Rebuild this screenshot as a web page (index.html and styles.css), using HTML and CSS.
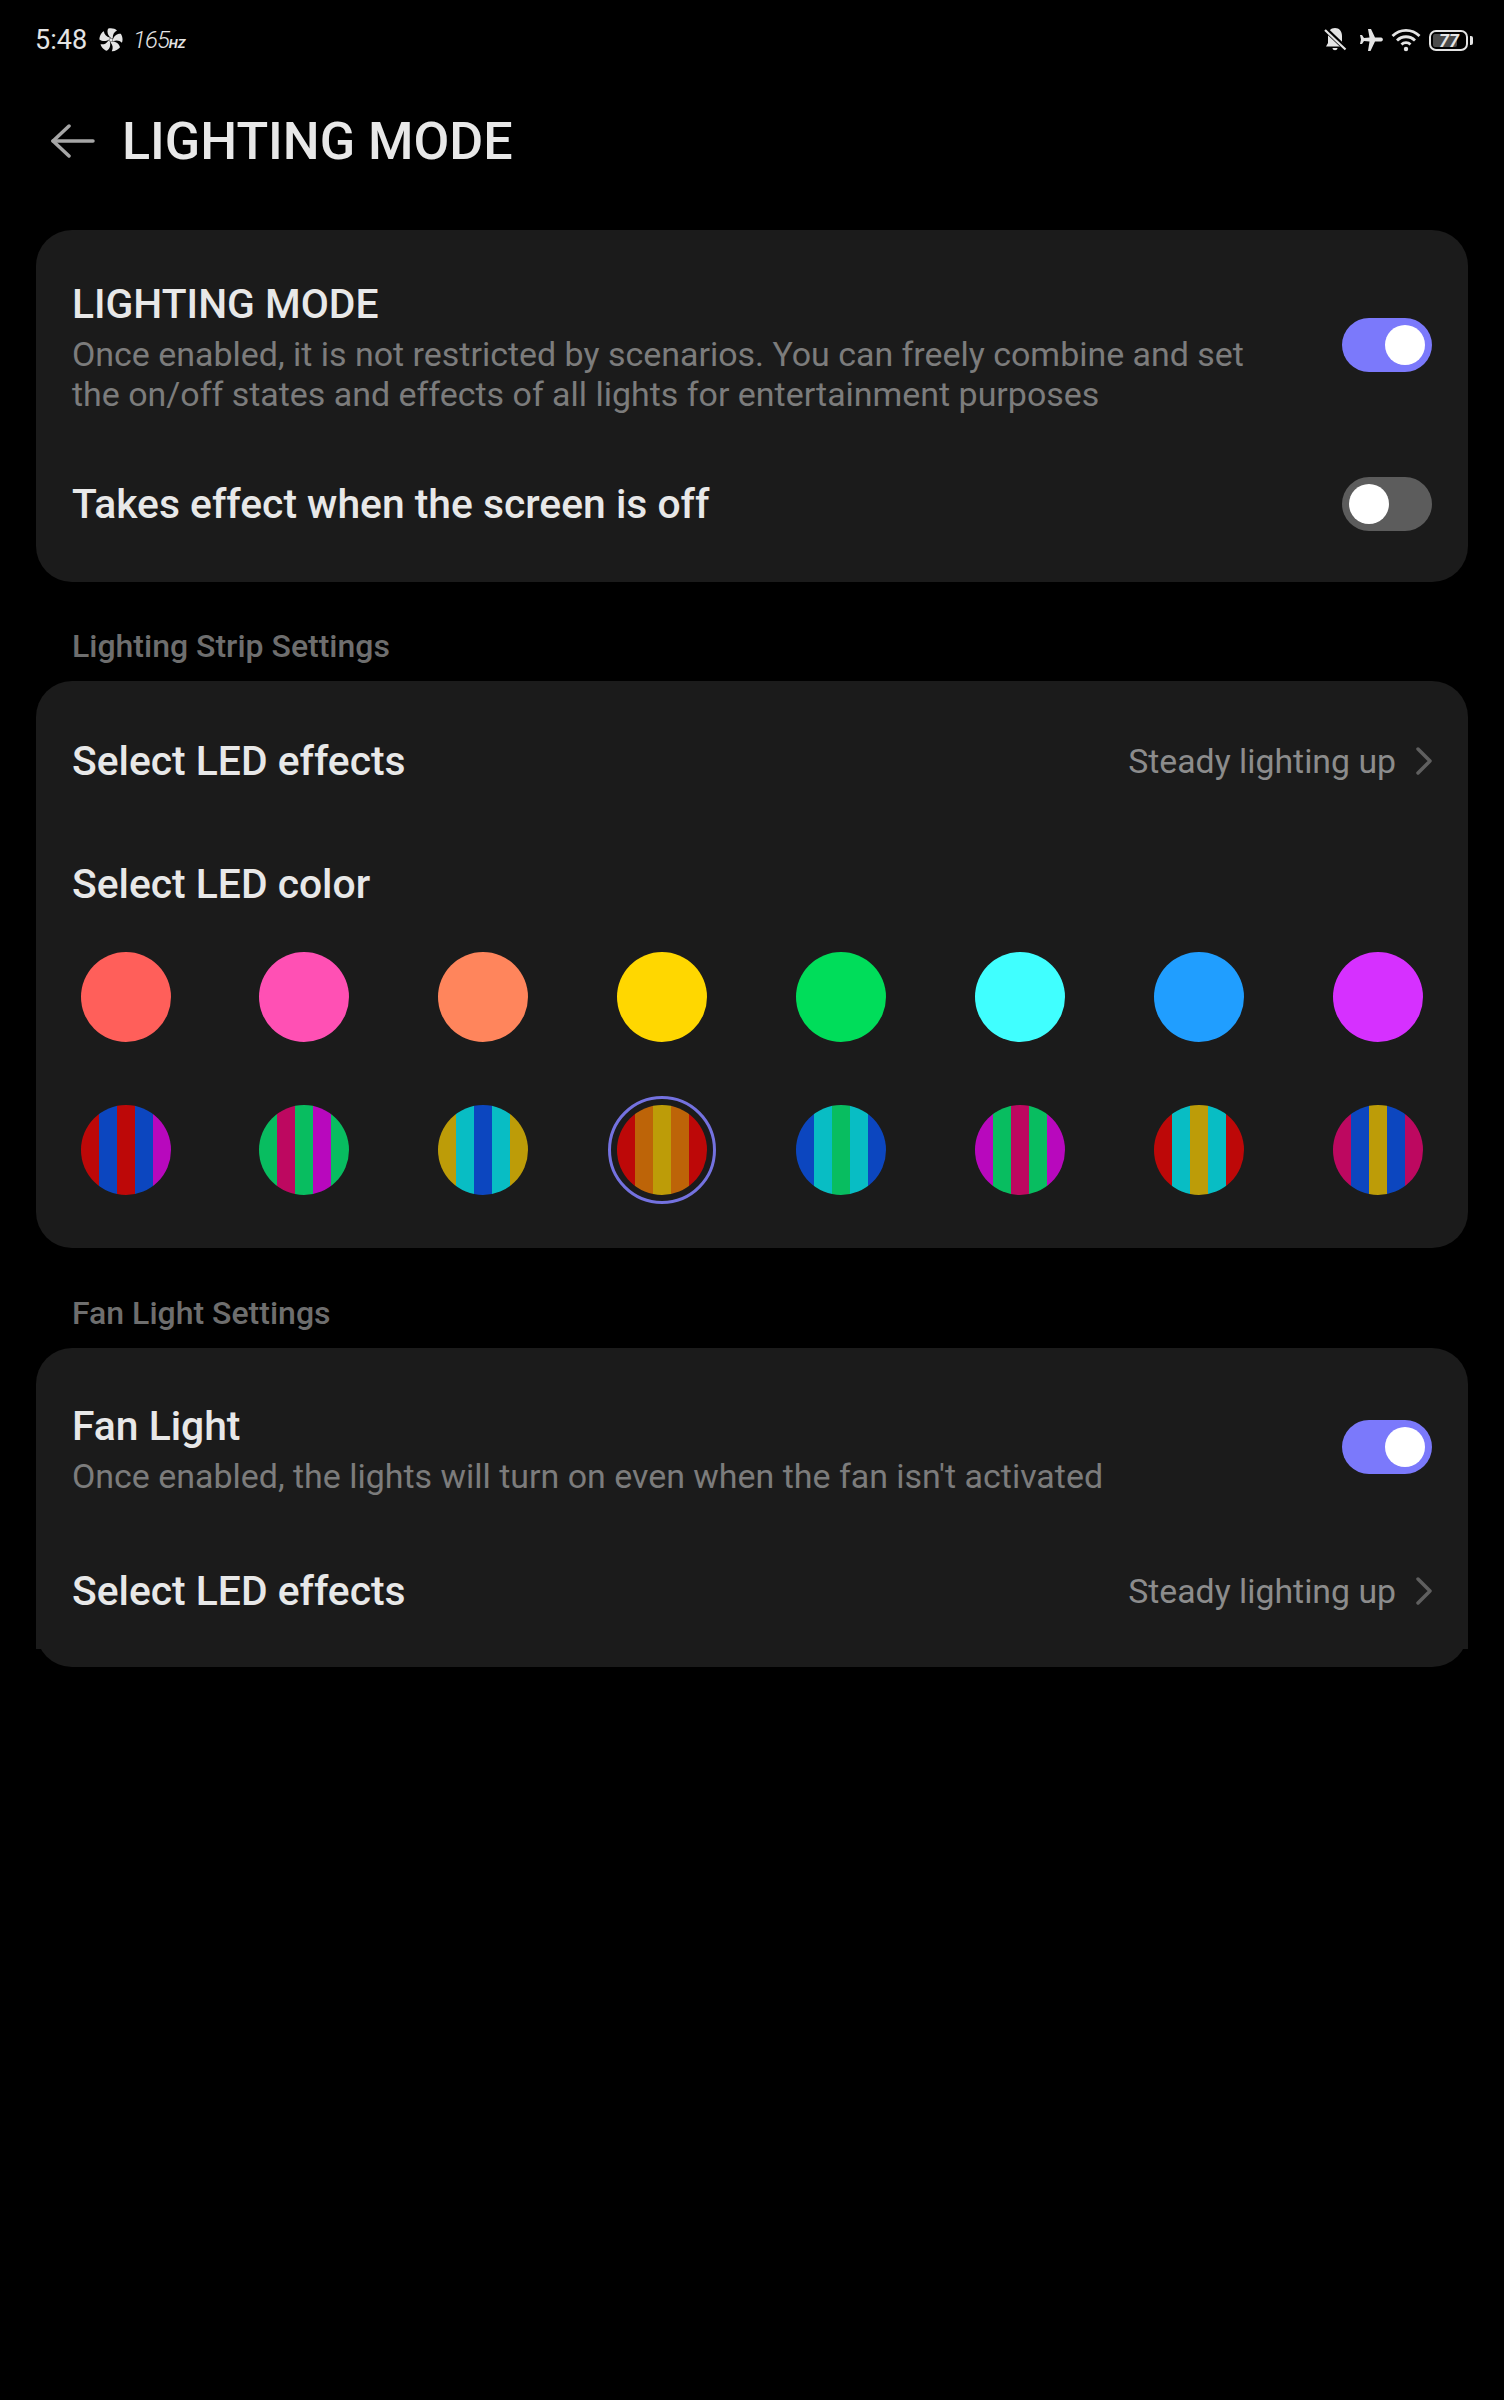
FILE: index.html
```html
<!DOCTYPE html>
<html lang="en">
<head>
  <meta charset="UTF-8">
  <title>Lighting Mode</title>
  <link rel="stylesheet" href="styles.css">
</head>
<body>
  <div class="status-bar">
    <div class="status-left">
      <span class="time">5:48</span>
      <svg class="fan-icon" width="24" height="24" viewBox="0 0 24 24" fill="#e4e4e4">
        <circle cx="12" cy="12" r="1.800"/>
        <path id="blade" d="M12 10 C9.500 8 7.500 5 9 0.800 C12 -0.200 16 0.600 18 2.500 C15 4 13.500 6.500 13.800 10.500 Z"/>
        <use href="#blade" transform="rotate(72 12 12)"/>
        <use href="#blade" transform="rotate(144 12 12)"/>
        <use href="#blade" transform="rotate(216 12 12)"/>
        <use href="#blade" transform="rotate(288 12 12)"/>
      </svg>
      <span class="refresh">165<small>HZ</small></span>
    </div>
    <div class="status-right">
      <svg class="bell" width="24" height="26" viewBox="0 0 24 26" fill="#e4e4e4">
        <path d="M12 1 C16.500 1 19 4.500 19 9 L19 15 L22 19.500 L3 19.500 L5 16 L5 9 C5 4.500 7.500 1 12 1 Z"/>
        <path d="M9.500 21 L14.500 21 C14.300 24 9.700 24 9.500 21 Z"/>
        <path d="M1 1 L23 22" stroke="#000" stroke-width="5"/>
        <path d="M2 3 L22.500 22.500" stroke="#e4e4e4" stroke-width="2.200"/>
      </svg>
      <svg width="24" height="24" viewBox="0 0 24 24" fill="#e4e4e4">
        <path d="M9 1 L12 1 L16 9.500 L22 9.500 C24.500 10 24.500 13 22 13.500 L16 13.500 L11.500 23 L9 23 L10.500 13.500 L5 13 L3 16 L1 16 L2 11.500 L1 7 L3 7 L5 10 L10.500 9.500 Z"/>
      </svg>
      <svg width="30" height="24" viewBox="0 0 30 24" fill="none" stroke="#e4e4e4" stroke-width="2.800">
        <path d="M1.500 8 C9 0.500 21 0.500 28.500 8"/>
        <path d="M6 12.500 C11 7.500 19 7.500 24 12.500"/>
        <path d="M10.500 16.500 C13 14 17 14 19.500 16.500"/>
        <circle cx="15" cy="21" r="2.200" fill="#e4e4e4" stroke="none"/>
      </svg>
      <div class="battery">
        <div class="battery-body"><span class="battery-level"></span><span class="battery-num">77</span></div>
        <span class="battery-tip"></span>
      </div>
    </div>
  </div>

  <div class="header">
    <svg class="back" width="44" height="34" viewBox="0 0 44 34" fill="none" stroke="#a6a6a6" stroke-width="3.500" stroke-linecap="round" stroke-linejoin="round">
      <path d="M2 17 L42 17"/>
      <path d="M18 2 L2 17 L18 32"/>
    </svg>
    <h1>LIGHTING MODE</h1>
  </div>

  <div class="card card-first">
    <div class="row row-mode">
      <div class="row-text">
        <div class="row-title">LIGHTING MODE</div>
        <div class="row-sub">Once enabled, it is not restricted by scenarios. You can freely combine and set the on/off states and effects of all lights for entertainment purposes</div>
      </div>
      <div class="toggle on"><span class="knob"></span></div>
    </div>
    <div class="row row-screen">
      <div class="row-title">Takes effect when the screen is off</div>
      <div class="toggle"><span class="knob"></span></div>
    </div>
  </div>

  <div class="section-label">Lighting Strip Settings</div>
  <div class="card card-strip">
    <div class="row row-effects">
      <div class="row-title">Select LED effects</div>
      <div class="row-value">
        <span>Steady lighting up</span>
        <svg width="16" height="28" viewBox="0 0 16 28" fill="none" stroke="#5f5f5f" stroke-width="3.500" stroke-linecap="round" stroke-linejoin="round"><path d="M2 2 L14 14 L2 26"/></svg>
      </div>
    </div>
    <div class="row-title color-title">Select LED color</div>
    <div class="swatches">
      <div class="swatch c-red"></div>
      <div class="swatch c-pink"></div>
      <div class="swatch c-orange"></div>
      <div class="swatch c-yellow"></div>
      <div class="swatch c-green"></div>
      <div class="swatch c-cyan"></div>
      <div class="swatch c-blue"></div>
      <div class="swatch c-purple"></div>
    </div>
    <div class="swatches swatches-striped">
      <div class="swatch s1"></div>
      <div class="swatch s2"></div>
      <div class="swatch s3"></div>
      <div class="swatch s4 selected"></div>
      <div class="swatch s5"></div>
      <div class="swatch s6"></div>
      <div class="swatch s7"></div>
      <div class="swatch s8"></div>
    </div>
  </div>

  <div class="section-label label-fan">Fan Light Settings</div>
  <div class="card card-fan">
    <div class="row row-fan">
      <div class="row-text">
        <div class="row-title">Fan Light</div>
        <div class="row-sub">Once enabled, the lights will turn on even when the fan isn't activated</div>
      </div>
      <div class="toggle on"><span class="knob"></span></div>
    </div>
    <div class="row row-effects2">
      <div class="row-title">Select LED effects</div>
      <div class="row-value">
        <span>Steady lighting up</span>
        <svg width="16" height="28" viewBox="0 0 16 28" fill="none" stroke="#5f5f5f" stroke-width="3.500" stroke-linecap="round" stroke-linejoin="round"><path d="M2 2 L14 14 L2 26"/></svg>
      </div>
    </div>
  </div>
</body>
</html>
```

FILE: styles.css
```css
body {
  margin: 0;
  background: #000;
  color: #e8e8e8;
  font-family: Roboto, "Liberation Sans", sans-serif;
  height: 2400px;
  overflow: hidden;
}

.status-bar {
  height: 78px;
  padding: 2px 31px 0 35px;
  box-sizing: border-box;
  display: flex;
  justify-content: space-between;
  align-items: center;
}
.status-left, .status-right {
  display: flex;
  align-items: center;
}
.status-right {
  gap: 8px;
}
.bell {
  margin-right: 4px;
}
.time {
  font-size: 27px;
  color: #e4e4e4;
}
.fan-icon {
  margin-left: 12px;
}
.refresh {
  margin-left: 10px;
  font-size: 24px;
  letter-spacing: -1px;
  font-style: italic;
  font-weight: 300;
  color: #e4e4e4;
}
.refresh small {
  font-size: 13px;
  letter-spacing: 0;
  font-weight: 700;
}
.battery {
  display: flex;
  align-items: center;
  gap: 2px;
}
.battery-body {
  position: relative;
  width: 39px;
  height: 21px;
  box-sizing: border-box;
  border: 2px solid #e4e4e4;
  border-radius: 7px;
  padding: 2px;
  display: flex;
}
.battery-level {
  width: 77%;
  background: #4a4a4a;
  border-radius: 2px;
}
.battery-num {
  position: absolute;
  left: 8px;
  top: 0;
  font-size: 18px;
  line-height: 17px;
  font-weight: 700;
  font-style: italic;
  color: #e4e4e4;
}
.battery-tip {
  width: 3px;
  height: 9px;
  background: #e4e4e4;
  border-radius: 0 2px 2px 0;
}

.header {
  height: 108px;
  box-sizing: border-box;
  padding: 18px 0 0 51px;
  display: flex;
  align-items: center;
  gap: 27px;
}
h1 {
  margin: 0;
  font-size: 52px;
  font-weight: 500;
  color: #e8e8e8;
}

.card {
  margin: 0 36px;
  background: #1b1b1b;
  border-radius: 36px;
  padding: 0 36px;
}
.card-first {
  margin-top: 44px;
  height: 352px;
}
.card-strip {
  height: 567px;
}
.card-fan {
  position: relative;
  z-index: 0;
  height: 319px;
}
/* the upper part of this card is square down to just above the bottom corners */
.card-fan::before {
  content: "";
  position: absolute;
  z-index: -1;
  left: 0;
  right: 0;
  top: 50%;
  bottom: 18px;
  background: #1b1b1b;
}

.section-label {
  margin: 0 72px;
  height: 99px;
  display: flex;
  align-items: center;
  padding-top: 29px;
  box-sizing: border-box;
  font-size: 32px;
  font-weight: 500;
  color: #6e6e6e;
}
.label-fan {
  height: 100px;
}

.row {
  display: flex;
  justify-content: space-between;
  align-items: center;
}
.row-title {
  font-size: 40.8px;
  font-weight: 500;
  color: #e8e8e8;
}
.row-sub {
  font-size: 33.95px;
  line-height: 40px;
  color: #7c7c7c;
  margin-top: 7px;
}
.row-text {
  width: 1200px;
}
.row-mode {
  padding-top: 50px;
}
.row-mode .toggle, .row-fan .toggle {
  margin-bottom: 5px;
}
.row-screen {
  margin-top: 62px;
}
.row-effects {
  height: 160px;
}
.color-title {
  margin-top: 19px;
}
.row-fan {
  padding-top: 54px;
}
.row-effects2 {
  margin-top: 70px;
}
.row-value {
  display: flex;
  align-items: center;
  gap: 20px;
  font-size: 33.8px;
  color: #8c8c8c;
}

.toggle {
  width: 90px;
  height: 54px;
  border-radius: 27px;
  background: #5c5c5c;
  display: flex;
  align-items: center;
  padding: 0 7px;
  box-sizing: border-box;
}
.toggle.on {
  background: #7b79fb;
  justify-content: flex-end;
}
.knob {
  width: 40px;
  height: 40px;
  border-radius: 50%;
  background: #fff;
}

.swatches {
  display: flex;
  justify-content: space-between;
  margin: 44px 9px 0 8.5px;
}
.swatches-striped {
  margin-top: 63px;
}
.swatch {
  position: relative;
  width: 90px;
  height: 90px;
  border-radius: 50%;
}
.selected::after {
  content: "";
  position: absolute;
  inset: -9px;
  border: 3px solid #7472e0;
  border-radius: 50%;
  box-sizing: border-box;
}
.c-red { background: #ff5f5a; }
.c-pink { background: #ff50b4; }
.c-orange { background: #ff855c; }
.c-yellow { background: #ffd700; }
.c-green { background: #00dd5a; }
.c-cyan { background: #40ffff; }
.c-blue { background: #209eff; }
.c-purple { background: #d630ff; }

/* five vertical bands, 18px each */
.s1 { background: linear-gradient(90deg, #bd0808 20%, #0c46bf 20% 40%, #bd0808 40% 60%, #0c46bf 60% 80%, #b808bd 80%); }
.s2 { background: linear-gradient(90deg, #08bd60 20%, #bd0860 20% 40%, #08bd60 40% 60%, #b808bd 60% 80%, #08bd60 80%); }
.s3 { background: linear-gradient(90deg, #bd9c08 20%, #08bdc4 20% 40%, #0c46bf 40% 60%, #08bdc4 60% 80%, #bd9c08 80%); }
.s4 { background: linear-gradient(90deg, #bd0808 20%, #bd6408 20% 40%, #bd9c08 40% 60%, #bd6408 60% 80%, #bd0808 80%); }
.s5 { background: linear-gradient(90deg, #0c46bf 20%, #08bdc4 20% 40%, #08bd60 40% 60%, #08bdc4 60% 80%, #0c46bf 80%); }
.s6 { background: linear-gradient(90deg, #b808bd 20%, #08bd60 20% 40%, #bd0860 40% 60%, #08bd60 60% 80%, #b808bd 80%); }
.s7 { background: linear-gradient(90deg, #bd0808 20%, #08bdc4 20% 40%, #bd9c08 40% 60%, #08bdc4 60% 80%, #bd0808 80%); }
.s8 { background: linear-gradient(90deg, #bd0860 20%, #0c46bf 20% 40%, #bd9c08 40% 60%, #0c46bf 60% 80%, #bd0860 80%); }
```
